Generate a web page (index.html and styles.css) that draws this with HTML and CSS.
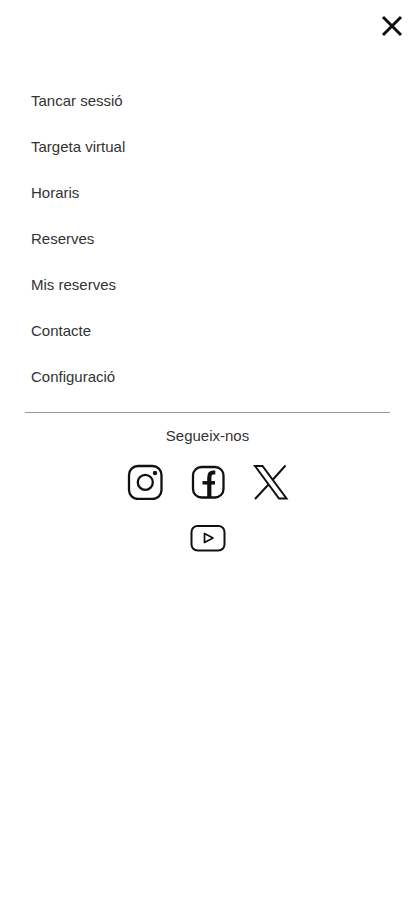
FILE: index.html
```html
<!DOCTYPE html>
<html lang="ca">
<head>
<meta charset="utf-8">
<meta name="viewport" content="width=device-width, initial-scale=1">
<title>Menú</title>
<link rel="stylesheet" href="styles.css">
</head>
<body>
<header class="top">
  <button class="close" type="button" aria-label="Tancar">
    <svg viewBox="0 0 24 24" width="24" height="24" fill="none" stroke="#111" stroke-width="3"><path d="M3 3 21 21M21 3 3 21"/></svg>
  </button>
</header>
<nav class="menu">
  <ul class="list">
    <li><a href="#">Tancar sessió</a></li>
    <li><a href="#">Targeta virtual</a></li>
    <li><a href="#">Horaris</a></li>
    <li><a href="#">Reserves</a></li>
    <li><a href="#">Mis reserves</a></li>
    <li><a href="#">Contacte</a></li>
    <li><a href="#">Configuració</a></li>
  </ul>
</nav>
<footer class="follow">
  <p class="title">Segueix-nos</p>
  <div class="social">
    <a href="#" aria-label="Instagram">
      <svg viewBox="0 0 36 36" width="36" height="36" fill="none" stroke="#111" stroke-width="2.300"><rect x="2" y="2" width="32.500" height="33" rx="9"/><circle cx="18.300" cy="18.300" r="7.500"/><circle cx="28" cy="9" r="2.200" fill="#111" stroke="none"/></svg>
    </a>
    <a href="#" aria-label="Facebook">
      <svg viewBox="0 0 36 36" width="36" height="36" fill="none" stroke="#111" stroke-width="2.300"><rect x="3" y="3" width="30.500" height="30.500" rx="8.500"/><path d="M19.300 33V13.500c0-3.500 1.500-5 4-5h2" stroke-width="4.200"/><path d="M12.500 18.800H25" stroke-width="3.500"/></svg>
    </a>
    <a href="#" aria-label="X">
      <svg viewBox="0 0 36 36" width="36" height="36" fill="none" stroke="#111" stroke-width="2"><path d="M2 2H9.500L33.500 34.500H26ZM32.500 1.500 19.500 16M15.500 20.500 2 35"/></svg>
    </a>
    <a href="#" aria-label="YouTube">
      <svg viewBox="0 0 36 36" width="36" height="36" fill="none" stroke="#111" stroke-width="2"><rect x="1.500" y="6" width="33" height="24.500" rx="6"/><path d="M14.500 13.500V22.500L23 18Z" stroke-width="1.700" stroke-linejoin="round"/></svg>
    </a>
  </div>
</footer>
</body>
</html>
```
FILE: styles.css
```css
* {
  box-sizing: border-box;
}

body {
  margin: 0;
  background: #fff;
  color: #333;
  font: 15px/20px "Liberation Sans", Arial, sans-serif;
}

a {
  color: inherit;
  text-decoration: none;
}

svg {
  display: block;
}

.top {
  display: flex;
  justify-content: flex-end;
  padding: 14px 11px 40px;
}

.close {
  padding: 0;
  border: 0;
  background: none;
}

.menu {
  margin: 0 25px;
  padding-bottom: 12px;
  border-bottom: 1px solid #999;
}

.list {
  margin: 0;
  padding: 0 6px;
  list-style: none;
}

.list a {
  display: block;
  line-height: 46px;
}

.follow {
  padding-top: 13px;
}

.title {
  margin: 0 0 18px;
  text-align: center;
}

.social {
  display: flex;
  flex-wrap: wrap;
  justify-content: center;
  gap: 20px 27px;
  max-width: 200px;
  margin: 0 auto;
}
```
